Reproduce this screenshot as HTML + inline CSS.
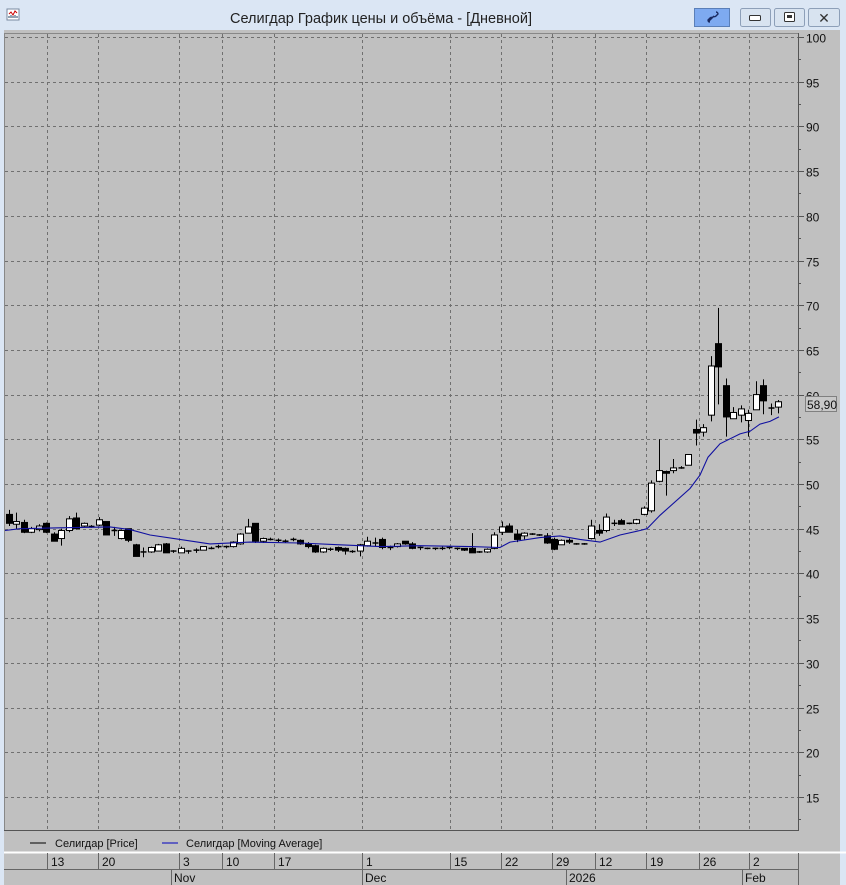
<!DOCTYPE html>
<html><head><meta charset="utf-8"><style>
body{margin:0;width:846px;height:885px;overflow:hidden;background:#dbe6f4;font-family:"Liberation Sans","Noto Sans CJK SC",sans-serif}
</style></head><body>
<svg id="s" width="846" height="885" xmlns="http://www.w3.org/2000/svg" style="position:absolute;left:0;top:0;font-family:'Liberation Sans',sans-serif">
<rect x="0" y="0" width="846" height="885" fill="#dbe6f4"/>
<rect x="4" y="30" width="836" height="855" fill="#c0c0c0"/>
<g transform="translate(7,9)"><rect width="12" height="11" fill="#fff" stroke="#7a8aa0"/><path d="M2 5 L4 3 L6 6 L8 2 L10 4" stroke="#c00" fill="none"/><path d="M2 9 V7 M4 9 V6 M6 9 V7 M8 9 V6 M10 9V7" stroke="#246"/></g>
<text x="381" y="23" font-size="14.5" text-anchor="middle" fill="#222">Селигдар График цены и объёма - [Дневной]</text>
<rect x="694.5" y="8.5" width="35" height="18" fill="#7eaaf0" stroke="#5a7fb8"/>
<path d="M708 22 l4-4 m0 0 l2 -2 m-4 6 a2 2 0 0 1 -2 -2 l2-2 a2 2 0 0 1 3 0 M716 12 a2 2 0 0 1 2 2 l-2 2 a2 2 0 0 1 -3 0" stroke="#1a2a60" stroke-width="1.4" fill="none"/>
<rect x="740.5" y="8.5" width="30" height="18" rx="2" fill="#d8e3f0" stroke="#8d9fb8"/>
<rect x="749.5" y="15.5" width="11" height="5" rx="1" fill="#fff" stroke="#333"/>
<rect x="774.5" y="8.5" width="30" height="18" rx="2" fill="#d8e3f0" stroke="#8d9fb8"/>
<rect x="784.5" y="12.5" width="10" height="9" rx="1" fill="#fff" stroke="#333"/><rect x="787" y="15" width="5" height="3" fill="#333"/>
<rect x="808.5" y="8.5" width="31" height="18" rx="2" fill="#d8e3f0" stroke="#8d9fb8"/>
<text x="824" y="23" font-size="14" text-anchor="middle" fill="#333">✕</text>
<line x1="4" y1="33.5" x2="798" y2="33.5" stroke="#888"/>
<line x1="4.5" y1="33" x2="4.5" y2="831" stroke="#888"/>
<line x1="798.5" y1="33" x2="798.5" y2="831" stroke="#555"/>
<line x1="4" y1="830.5" x2="798" y2="830.5" stroke="#555"/>
<g id="grid" stroke="#707070" stroke-dasharray="3,3"></g>
<g id="axis" font-size="12" fill="#111"></g>
<g id="c"></g>
<polyline id="ma" fill="none" stroke="#1010a0" stroke-width="1.1"/>
<rect x="805.5" y="396.5" width="31" height="15" fill="#c8c8c8" stroke="#808080"/>
<text x="807" y="409" font-size="12" fill="#111">58,90</text>
<line x1="30" y1="843" x2="46" y2="843" stroke="#000"/>
<text x="55" y="847" font-size="11" fill="#111">Селигдар [Price]</text>
<line x1="162" y1="843" x2="178" y2="843" stroke="#0000c0"/>
<text x="186" y="847" font-size="11" fill="#111">Селигдар [Moving Average]</text>
<line x1="4" y1="852.5" x2="846" y2="852.5" stroke="#fff" stroke-width="2"/>
<line x1="4" y1="869.5" x2="798" y2="869.5" stroke="#666"/>
<line x1="798.5" y1="853" x2="798.5" y2="885" stroke="#666"/>
<g id="dates" font-size="12" fill="#111"></g>
</svg>
<script>
const NS="http://www.w3.org/2000/svg";
function el(p,t,a,txt){const e=document.createElementNS(NS,t);for(const k in a)e.setAttribute(k,a[k]);if(txt)e.textContent=txt;document.getElementById(p).appendChild(e);return e;}
const Y=v=>37+(100-v)*8.94;
const gx=[47,98,179,222,274,362,450,501,552,595,646,699,749];
gx.forEach(x=>el("grid","line",{x1:x+.5,y1:34,x2:x+.5,y2:830}));
for(let v=15;v<=100;v+=5){const y=Math.round(Y(v))+.5;el("grid","line",{x1:5,y1:y,x2:798,y2:y});
el("axis","line",{x1:798,y1:y,x2:804,y2:y,stroke:"#555"});el("axis","text",{x:806,y:y+5},String(v));}
for(let v=12.5;v<100;v+=5){const y=Math.round(Y(v))+.5;el("axis","line",{x1:798,y1:y,x2:801,y2:y,stroke:"#555"});}
const d=[[46.6,45.6,47.1,45.3],[45.5,45.8,46.8,45.0],[45.7,44.6,46,44.5],[44.6,45,45.2,44.5],[44.9,45.3,45.5,44.7],[45.6,44.6,45.7,44.5],[44.4,43.6,44.6,43.6],[43.9,44.8,45,43.1],[44.8,46.1,46.4,44.6],[46.2,45,46.8,44.9],[45.3,45.6,45.7,45.2],[45.3,45.2,45.4,45.1],[45.4,46,46.3,45.3],[45.8,44.3,45.8,44.3],[44.8,44.8,45.2,44.2],[43.9,44.8,44.9,43.8],[45,43.7,45,43.5],[43.2,41.9,43.3,41.9],[42.4,42.4,42.9,41.8],[42.4,42.9,43,42.3],[42.5,43.2,43.3,42.5],[43.3,42.3,43.4,42.3],[42.5,42.5,42.6,42.3],[42.3,42.8,43,42.3],[42.5,42.5,42.6,42.2],[42.6,42.6,42.8,42.3],[42.6,43,43,42.6],[42.8,42.8,43,42.7],[43,43,43.2,42.8],[43,43,43.1,42.8],[43.0,43.5,43.6,42.9],[43.3,44.4,44.5,43.2],[44.5,45.2,46.1,44.5],[45.6,43.6,45.6,43.4],[43.6,43.9,44,43.4],[43.8,43.8,44,43.7],[43.7,43.7,43.9,43.5],[43.6,43.6,43.8,43.4],[43.8,43.8,44,43.6],[43.7,43.3,43.8,43.2],[43.3,43,43.5,42.8],[43.1,42.4,43.2,42.3],[42.4,42.8,42.9,42.3],[42.7,42.7,42.9,42.5],[42.9,42.6,43,42.4],[42.8,42.5,42.9,42.1],[42.5,42.4,42.6,42.3],[42.5,43.2,43.3,41.9],[43.1,43.6,44.1,43],[43.4,43.4,44,43],[43.8,42.9,44,42.7],[42.9,42.9,43.1,42.6],[43,43.3,43.4,42.9],[43.6,43.3,43.6,43.2],[43.3,42.8,43.5,42.7],[42.9,42.9,43,42.6],[42.8,42.8,42.9,42.7],[42.8,42.8,42.9,42.6],[42.8,42.8,43,42.6],[42.9,42.9,43,42.7],[42.8,42.8,42.9,42.6],[42.8,42.6,42.8,42.5],[42.8,42.3,44.5,42.3],[42.4,42.4,42.5,42.3],[42.4,42.7,42.8,42.3],[42.8,44.3,44.6,42.7],[44.6,45.2,45.8,44.3],[45.3,44.6,45.6,44.6],[44.4,43.8,44.9,43.5],[44.2,44.5,44.6,43.8],[44.4,44.4,44.5,44.3],[44.3,44.3,44.4,44.2],[44.2,43.4,44.5,43.3],[43.8,42.7,44,42.6],[43.2,43.7,43.8,43.2],[43.7,43.5,43.9,43.3],[43.3,43.3,43.4,43.2],[43.3,43.3,43.4,43.2],[43.9,45.3,46,43.8],[44.8,44.5,45.5,44.2],[44.8,46.3,46.7,44.6],[45.6,45.6,46,45.3],[45.9,45.5,46.1,45.5],[45.6,45.6,45.7,45.5],[45.6,46,46.1,45.5],[46.6,47.3,47.5,46.5],[47,50.1,50.4,46.8],[50.3,51.5,55,50.2],[51.4,51.2,51.5,48.7],[51.5,51.8,52.8,51.2],[51.8,51.8,52,51.7],[52.1,53.3,53.3,52.1],[56.1,55.7,57.2,54.3],[55.8,56.3,56.7,55.3],[57.7,63.2,64.3,57],[65.7,63.1,69.7,58.9],[61,57.5,61.8,55.3],[57.3,58,58.6,57.3],[57.7,58.4,58.8,56.9],[57.1,57.9,58.3,55.3],[58.3,60,61.5,58.3],[61,59.3,61.7,57.8],[58.5,58.5,59,57.7],[58.6,59.2,59.4,57.9]];
const sp=(778-9)/(d.length-1);
d.forEach((c,i)=>{const x=Math.round(9+i*sp)+.5;const[o,cl,h,l]=c;
el("c","line",{x1:x,y1:Y(h),x2:x,y2:Y(l),stroke:"#000"});
const t=Math.min(Y(o),Y(cl)),b=Math.max(Y(o),Y(cl));
if(b-t<1.5)el("c","line",{x1:x-3,y1:(t+b)/2,x2:x+3,y2:(t+b)/2,stroke:"#000","stroke-width":1.5});
else el("c","rect",{x:x-3,y:t,width:6,height:b-t,fill:cl<o?"#000":"#fff",stroke:"#000"});});
const m=[[5,44.8],[20,45],[60,45.1],[110,45.2],[130,44.9],[150,44.3],[180,43.8],[210,43.3],[250,43.5],[300,43.4],[340,43.2],[380,43],[420,43.1],[470,43],[500,42.9],[510,43.5],[540,44],[560,44.2],[580,43.8],[600,43.5],[620,44.3],[640,44.8],[647,45],[660,46.5],[690,49.5],[700,51],[708,53],[720,54.5],[740,55.6],[750,55.9],[760,56.7],[770,57],[779,57.5]];
document.getElementById("ma").setAttribute("points",m.map(p=>p[0]+","+Y(p[1]).toFixed(1)).join(" "));
const dl=[[47,"13"],[98,"20"],[179,"3"],[222,"10"],[274,"17"],[362,"1"],[450,"15"],[501,"22"],[552,"29"],[595,"12"],[646,"19"],[699,"26"],[749,"2"]];
dl.forEach(a=>{el("dates","line",{x1:a[0]+.5,y1:853,x2:a[0]+.5,y2:869,stroke:"#666"});el("dates","text",{x:a[0]+4,y:866},a[1]);});
[[171,"Nov"],[362,"Dec"],[566,"2026"],[742,"Feb"]].forEach(a=>{el("dates","line",{x1:a[0]+.5,y1:870,x2:a[0]+.5,y2:885,stroke:"#666"});el("dates","text",{x:a[0]+3,y:882},a[1]);});
</script>
</body></html>
